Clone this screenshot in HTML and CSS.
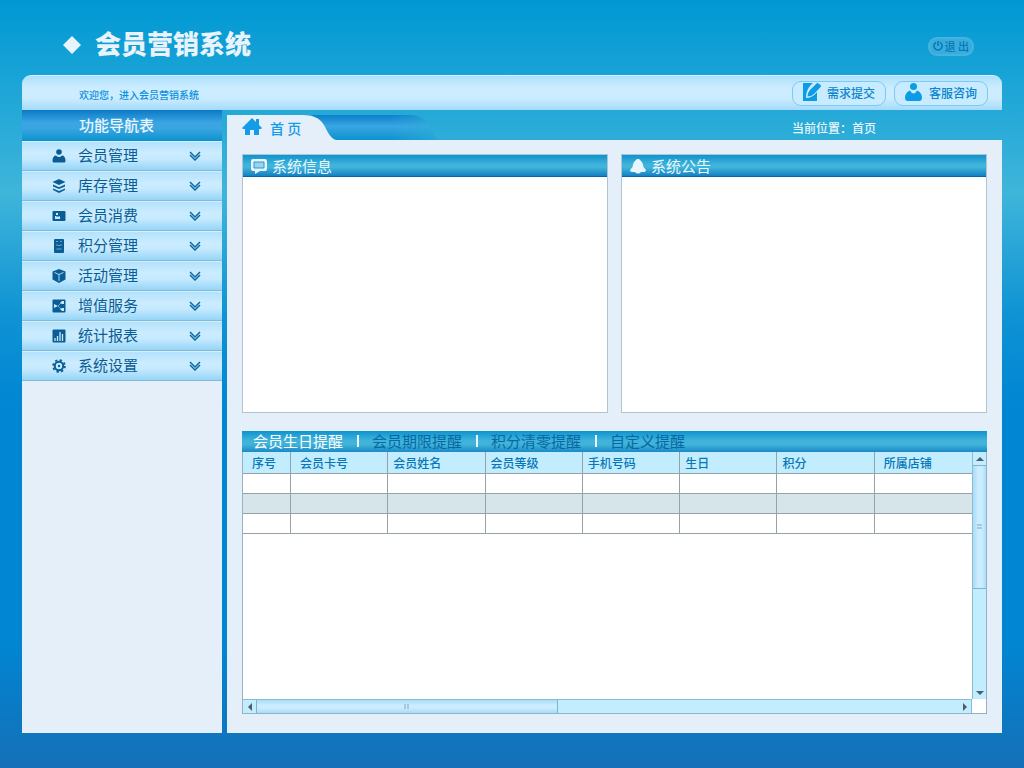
FILE: index.html
```
<!DOCTYPE html>
<html lang="zh-CN">

<head>
	<meta charset="UTF-8" />
	<meta name="viewport" content="width=device-width, initial-scale=1.0" />
	<title>会员营销系统</title>
	<link rel="stylesheet" href="styles.css">
</head>

<body>
	<header class="header">
		<div class="brand">
			<svg width="18" height="18" viewBox="0 0 18 18"><path d="M9 0l9 9-9 9-9-9z" fill="#e8f3fc"/></svg>
			<h1>会员营销系统</h1>
		</div>
		<button class="logout">
			<svg width="10" height="10" viewBox="0 0 10 10" fill="none" stroke="currentColor" stroke-width="1.5"><path d="M3 1.400a4.100 4.100 0 1 0 4 0M5 0v5"/></svg>
			<span>退 出</span>
		</button>
	</header>

	<div class="topbar">
		<span class="welcome">欢迎您，进入会员营销系统</span>
		<div class="actions">
			<button class="action">
				<svg width="18" height="18" viewBox="0 0 18 18" fill="#0c9be6"><path d="M0 0h10C6 3 3 8 3 15c4 0 8-2 11-6v9H0z"/><path d="M13.500 0.500q1-.8 2 0l2 1.500q1 1 0 2L11 11q-2 2-6.500 2.500Q5 9 7 7z"/></svg>
				需求提交
			</button>
			<button class="action">
				<svg width="18" height="18" viewBox="0 0 18 18" fill="#0c9be6"><circle cx="8.500" cy="3.500" r="3.500"/><path d="M5 7.500Q6.500 10.500 8.500 10.500T12 7.500c3 1 5 4 5 7 0 2-1 3.500-2.500 3.500h-12C1 18 0 16.500 0 14.500c0-3 2-6 5-7z"/></svg>
				客服咨询
			</button>
		</div>
	</div>

	<div class="layout">
		<aside class="sidebar">
			<h2>功能导航表</h2>
			<ul class="menu">
				<li><a href="#">
					<svg class="icon" viewBox="0 0 14 14"><circle cx="7" cy="3" r="2.800"/><path d="M4 6.500q3 3 6 0c2 0 3.500 2 3.500 5 0 1.500-.5 2-1.500 2H2c-1 0-1.500-.5-1.500-2 0-3 1.500-5 3.500-5z"/></svg>
					<span>会员管理</span>
					<svg class="chevron" viewBox="0 0 12 10"><path d="M1 1l5 5 5-5M1 4l5 5 5-5"/></svg>
				</a></li>
				<li><a href="#">
					<svg class="icon" viewBox="0 0 14 14"><path d="M7 0l6.500 3L7 6 .5 3zM1 5.500l6 2.800 6-2.800v2L7 10 1 7.500zM1 9.500l6 2.500 6-2.500v1.500L7 14l-6-3z"/></svg>
					<span>库存管理</span>
					<svg class="chevron" viewBox="0 0 12 10"><path d="M1 1l5 5 5-5M1 4l5 5 5-5"/></svg>
				</a></li>
				<li><a href="#">
					<svg class="icon" viewBox="0 0 14 14"><path fill-rule="evenodd" d="M1.500 2h11q1 0 1 1v8q0 1-1 1h-11q-1 0-1-1V3q0-1 1-1zM3 7v3h5V7L6.500 8 6 7l-1 1-1-1zM4 4v2h2V4z"/></svg>
					<span>会员消费</span>
					<svg class="chevron" viewBox="0 0 12 10"><path d="M1 1l5 5 5-5M1 4l5 5 5-5"/></svg>
				</a></li>
				<li><a href="#">
					<svg class="icon" viewBox="0 0 14 14"><rect x="2" y="0" width="10" height="14" rx="1"/><path d="M4 2.500h2M8 2.500h2M4 6h2l1 1 1-1h2M4.500 10h5" fill="none" stroke="#7fb9dc" stroke-width=".8"/></svg>
					<span>积分管理</span>
					<svg class="chevron" viewBox="0 0 12 10"><path d="M1 1l5 5 5-5M1 4l5 5 5-5"/></svg>
				</a></li>
				<li><a href="#">
					<svg class="icon" viewBox="0 0 14 14"><path d="M7 0l6.500 2.500v8L7 14 .5 10.500v-8z"/><path d="M2.500 3.500l4.500 2 4.500-2M7 5.500V12" fill="none" stroke="#a9dcf8"/></svg>
					<span>活动管理</span>
					<svg class="chevron" viewBox="0 0 12 10"><path d="M1 1l5 5 5-5M1 4l5 5 5-5"/></svg>
				</a></li>
				<li><a href="#">
					<svg class="icon" viewBox="0 0 14 14"><rect x=".5" y=".5" width="13" height="13" rx="1"/><path d="M2 5l4 2-4 2zM8 4l2-2h2v3h-2zM8 10l2-1h2v3h-2z" fill="#c7ecff"/><path d="M6 7l3-3M6 7l3 3" stroke="#c7ecff" stroke-width=".5"/></svg>
					<span>增值服务</span>
					<svg class="chevron" viewBox="0 0 12 10"><path d="M1 1l5 5 5-5M1 4l5 5 5-5"/></svg>
				</a></li>
				<li><a href="#">
					<svg class="icon" viewBox="0 0 14 14"><rect x=".5" y=".5" width="13" height="13" rx="1"/><path d="M3 9v3M5.500 7v5M8 3v9M10.500 5v7" fill="none" stroke="#c7ecff" stroke-width="1.300"/></svg>
					<span>统计报表</span>
					<svg class="chevron" viewBox="0 0 12 10"><path d="M1 1l5 5 5-5M1 4l5 5 5-5"/></svg>
				</a></li>
				<li><a href="#">
					<svg class="icon" viewBox="0 0 14 14" fill="none" stroke="currentColor"><circle cx="7" cy="7" r="4.200" stroke-width="2"/><circle cx="7" cy="7" r="1.200" fill="currentColor" stroke="none"/><circle cx="7" cy="7" r="5.900" stroke-width="1.800" stroke-dasharray="2.300 2.330"/></svg>
					<span>系统设置</span>
					<svg class="chevron" viewBox="0 0 12 10"><path d="M1 1l5 5 5-5M1 4l5 5 5-5"/></svg>
				</a></li>
			</ul>
		</aside>

		<main class="main">
			<div class="tabbar">
				<!-- curved tab shapes sit behind the label -->
				<svg class="tab-shape" width="212" height="25" viewBox="0 0 212 25">
					<defs>
						<linearGradient id="tabBlue" x1="0" y1="0" x2="0" y2="1">
							<stop offset="0" stop-color="#0b7fcb"/>
							<stop offset=".45" stop-color="#3aa5e2"/>
							<stop offset="1" stop-color="#0b93cf"/>
						</linearGradient>
						<linearGradient id="tabFade" x1="0" y1="0" x2="1" y2="0">
							<stop offset=".65" stop-color="#2eacd8" stop-opacity="0"/>
							<stop offset="1" stop-color="#2eacd8" stop-opacity=".8"/>
						</linearGradient>
					</defs>
					<path d="M70 0h112c23 0 20 20 30 25H70z" fill="url(#tabBlue)"/>
					<path d="M70 0h112c23 0 20 20 30 25H70z" fill="url(#tabFade)"/>
					<path d="M0 0h76c26 0 20 20 33 25H0z" fill="#e5effa"/>
				</svg>
				<a class="tab" href="#">
					<svg width="20" height="18" viewBox="0 0 20 18"><path fill="#149ce8" d="M10 0l4 4V1h3v6l3 3-1 1h-2v6h-5v-5H8v5H3v-6H1l-1-1z"/></svg>
					<span>首 页</span>
				</a>
				<span class="location">当前位置：首页</span>
			</div>

			<div class="content">
				<div class="boxes">
					<section class="box">
						<h3>
							<svg width="16" height="16" viewBox="0 0 16 16"><path fill="#e8f5fc" d="M2 1h12q2 0 2 2v8q0 2-2 2H9l-5 3v-3H2q-2 0-2-2V3q0-2 2-2z"/><path fill="#9bd3ee" stroke="#2797cf" d="M3 4h10v6H3z"/></svg>
							系统信息
						</h3>
					</section>
					<section class="box">
						<h3>
							<svg width="16" height="16" viewBox="0 0 16 16"><path fill="#e8f5fc" d="M8 1c1 0 2 .5 2.500 1.500C12.500 4 13 6 13.500 9l2.500 3q0 2-2 2h-3q-1 1.500-3 1.500T5 14H2q-2 0-2-2l2.500-3c.5-3 1-5 3-6.500C6 1.500 7 1 8 1z"/></svg>
							系统公告
						</h3>
					</section>
				</div>

				<section class="reminders">
					<nav class="reminder-tabs">
						<a class="active" href="#">会员生日提醒</a>
						<a href="#">会员期限提醒</a>
						<a href="#">积分清零提醒</a>
						<a href="#">自定义提醒</a>
					</nav>
					<div class="grid">
						<div class="table-wrap">
							<table>
								<thead>
									<tr>
										<th class="no wide">序号</th>
										<th class="wide">会员卡号</th>
										<th>会员姓名</th>
										<th>会员等级</th>
										<th>手机号码</th>
										<th>生日</th>
										<th>积分</th>
										<th class="wide">所属店铺</th>
									</tr>
								</thead>
								<tbody>
									<tr><td></td><td></td><td></td><td></td><td></td><td></td><td></td><td></td></tr>
									<tr><td></td><td></td><td></td><td></td><td></td><td></td><td></td><td></td></tr>
									<tr><td></td><td></td><td></td><td></td><td></td><td></td><td></td><td></td></tr>
								</tbody>
							</table>
						</div>
						<div class="scroll vertical">
							<button aria-label="向上"><svg width="8" height="4" viewBox="0 0 8 4"><path d="M4 0l4 4H0z"/></svg></button>
							<div class="track"><div class="thumb"><i></i></div></div>
							<button aria-label="向下"><svg width="8" height="4" viewBox="0 0 8 4"><path d="M0 0h8L4 4z"/></svg></button>
						</div>
						<div class="scroll horizontal">
							<button aria-label="向左"><svg width="4" height="8" viewBox="0 0 4 8"><path d="M4 0v8L0 4z"/></svg></button>
							<div class="track"><div class="thumb"><i></i></div></div>
							<button aria-label="向右"><svg width="4" height="8" viewBox="0 0 4 8"><path d="M0 0l4 4-4 4z"/></svg></button>
						</div>
					</div>
				</section>
			</div>
		</main>
	</div>
</body>

</html>
```
FILE: styles.css
```
* {
	box-sizing: border-box;
}
body {
	display: flex;
	flex-direction: column;
	min-height: 100vh;
	margin: 0;
	padding: 0 22px 35px;
	background: linear-gradient(#0098d4 0%, #3fb5da 25%, #0f93d4 41%, #0086d3 53%, #0086d3 83%, #1570b8 100%);
	font-family: 'Noto Sans CJK SC', sans-serif;
	font-size: 12px;
}
h1, h2, h3, ul {
	margin: 0;
	padding: 0;
}
a {
	color: inherit;
	text-decoration: none;
}
button {
	font-family: inherit;
	cursor: pointer;
}
svg {
	flex: none;
	display: block;
}

/* header */
.header {
	display: flex;
	align-items: center;
	justify-content: space-between;
	height: 75px;
	padding: 14px 28px 0 41px;
}
.brand {
	display: flex;
	align-items: center;
	gap: 14px;
}
.brand h1 {
	padding-bottom: 3px;
	font-size: 26px;
	line-height: 32px;
	font-weight: 900;
	color: #e8f3fc;
}
.logout {
	display: flex;
	align-items: center;
	gap: 2px;
	height: 19px;
	margin-top: 3px;
	padding: 0 3px;
	border: 2px solid #45b3e0;
	border-radius: 9px;
	background-color: #38addd;
	font-size: 11px;
	line-height: 14px;
	font-weight: 500;
	color: #0577b4;
}
.logout span {
	padding-bottom: 1px;
}
.topbar {
	display: flex;
	align-items: center;
	justify-content: space-between;
	height: 35px;
	padding: 0 14px 0 57px;
	border-top: 1px solid #d8f1ff;
	border-radius: 9px 9px 0 0;
	background: linear-gradient(#ade0fc, #ccecff 35%, #ccecff 65%, #a5dafa);
}
.welcome {
	padding-top: 2px;
	font-size: 10px;
	font-weight: 500;
	color: #0b90dc;
}
.actions {
	display: flex;
	gap: 8px;
}
.action {
	display: flex;
	align-items: center;
	gap: 6px;
	height: 25px;
	padding: 0 10px 2px;
	border: 1px solid #7ccaf3;
	border-radius: 9px;
	background-color: #c9ebff;
	font-size: 12px;
	font-weight: 500;
	color: #0b86cc;
}

/* left menu */
.layout {
	display: flex;
	flex: 1;
	gap: 5px;
}
.sidebar {
	width: 200px;
	flex: none;
	background-color: #e5effa;
}
.sidebar h2 {
	height: 31px;
	padding-left: 57px;
	background: linear-gradient(#0b78c5, #3aa5e2 40%, #3aa5e2 60%, #0b93cf);
	font-size: 15px;
	line-height: 30px;
	font-weight: 500;
	color: #e8f5fc;
}
.menu {
	list-style: none;
}
.menu a {
	display: flex;
	align-items: center;
	height: 30px;
	padding: 0 21px 0 30px;
	border-top: 1px solid #d3effd;
	border-bottom: 1px solid #84b9d8;
	background: linear-gradient(#b3e2fc, #ccecff 40%, #c5eaff 60%, #96d5f7);
	font-size: 15px;
	line-height: 26px;
	color: #0a5d94;
}
.menu span {
	flex: 1;
	padding: 0 0 2px 12px;
}
.icon {
	width: 14px;
	height: 14px;
	fill: currentColor;
}
.icon[fill="none"] {
	fill: none;
}
.chevron {
	width: 12px;
	height: 10px;
	fill: none;
	stroke: #0a6aa5;
	stroke-width: 1.5;
}

/* right side */
.main {
	display: flex;
	flex: 1;
	flex-direction: column;
	min-width: 0;
}
.tabbar {
	position: relative;
	display: flex;
	align-items: center;
	justify-content: space-between;
	height: 30px;
	padding: 4px 126px 0 15px;
}
.tab-shape {
	position: absolute;
	left: 0;
	bottom: 0;
}
.tab {
	position: relative;
	display: flex;
	align-items: center;
	gap: 8px;
	font-size: 14px;
	line-height: 22px;
	font-weight: 500;
	color: #149ce8;
}
.tab span {
	padding-top: 2px;
}
.location {
	font-weight: 500;
	color: #e8f5fc;
}
.content {
	display: flex;
	flex: 1;
	flex-direction: column;
	gap: 18px;
	padding: 14px 15px 19px;
	background-color: #e5effa;
}
.boxes {
	display: grid;
	grid-template-columns: 1fr 1fr;
	gap: 13px;
}
.box {
	min-height: 259px;
	border: 1px solid #b3c4d1;
	background-color: white;
}
.box h3 {
	display: flex;
	align-items: center;
	gap: 5px;
	height: 22px;
	padding-left: 8px;
	border-bottom: 1px solid #0863ae;
	background: linear-gradient(#0f93cf, #3fb3da 45%, #3fb3da 60%, #1480c2);
	font-size: 15px;
	line-height: 20px;
	font-weight: 400;
	color: #e8f8ff;
}

/* reminders */
.reminders {
	display: flex;
	flex: 1;
	flex-direction: column;
	min-height: 220px;
}
.reminder-tabs {
	display: flex;
	height: 21px;
	padding-left: 11px;
	background: linear-gradient(#0f93cf, #3fb3da 45%, #3fb3da 65%, #1b89c6);
	font-size: 15px;
	line-height: 19px;
	color: #0868a3;
}
.reminder-tabs a {
	display: flex;
	align-items: center;
	height: 19px;
}
.reminder-tabs a + a::before {
	content: "";
	width: 2px;
	height: 12px;
	margin: 0 13px 0 14px;
	background-color: #e8f5fc;
}
.reminder-tabs .active {
	color: white;
}
.grid {
	display: grid;
	flex: 1;
	grid-template-columns: 1fr 14px;
	grid-template-rows: 1fr 14px;
	border: 1px solid #93b3c0;
	border-top: none;
	background-color: white;
}
.table-wrap {
	overflow: hidden;
}
table {
	width: 100%;
	border-collapse: separate;
	border-spacing: 0;
	table-layout: fixed;
}
th, td {
	padding: 0;
	border-right: 1px solid #95a3a9;
	border-bottom: 1px solid #95a3a9;
}
th:last-child, td:last-child {
	border-right: none;
}
th {
	height: 22px;
	padding: 0 0 0 5px;
	background-color: #c1edff;
	line-height: 18px;
	font-weight: 500;
	text-align: left;
	color: #0876b6;
}
th.wide {
	padding-left: 9px;
}
th.no {
	width: 48px;
}
td {
	height: 20px;
}
tbody tr:nth-child(even) td {
	background-color: #d5e5ea;
}
.scroll {
	display: flex;
	background-color: #c1edff;
}
.scroll button {
	display: flex;
	align-items: center;
	justify-content: center;
	flex: none;
	width: 13px;
	height: 13px;
	padding: 0;
	border: none;
	background: none;
	fill: #4a5f6b;
}
.vertical {
	flex-direction: column;
	border-left: 1px solid #8bbdd2;
}
.horizontal {
	border-top: 1px solid #8bbdd2;
	border-right: 1px solid #8bbdd2;
}
.track {
	display: flex;
	flex: 1;
}
.vertical .track {
	flex-direction: column;
}
.thumb {
	display: flex;
	align-items: center;
	justify-content: center;
	border: 0 solid #7fb4cf;
}
.vertical .thumb {
	height: 56%;
	border-width: 1px 0;
	background: linear-gradient(to right, #a8dcf9, #ccecff 40%, #ccecff 70%, #a8dcf9);
}
.horizontal .thumb {
	width: 43%;
	border-width: 0 1px;
	background: linear-gradient(#a8dcf9, #ccecff 40%, #ccecff 60%, #a8dcf9);
}
.thumb i {
	width: 5px;
	height: 5px;
	border: 0 solid #a5c8dc;
}
.vertical .thumb i {
	border-width: 2px 0;
}
.horizontal .thumb i {
	border-width: 0 2px;
}
```
